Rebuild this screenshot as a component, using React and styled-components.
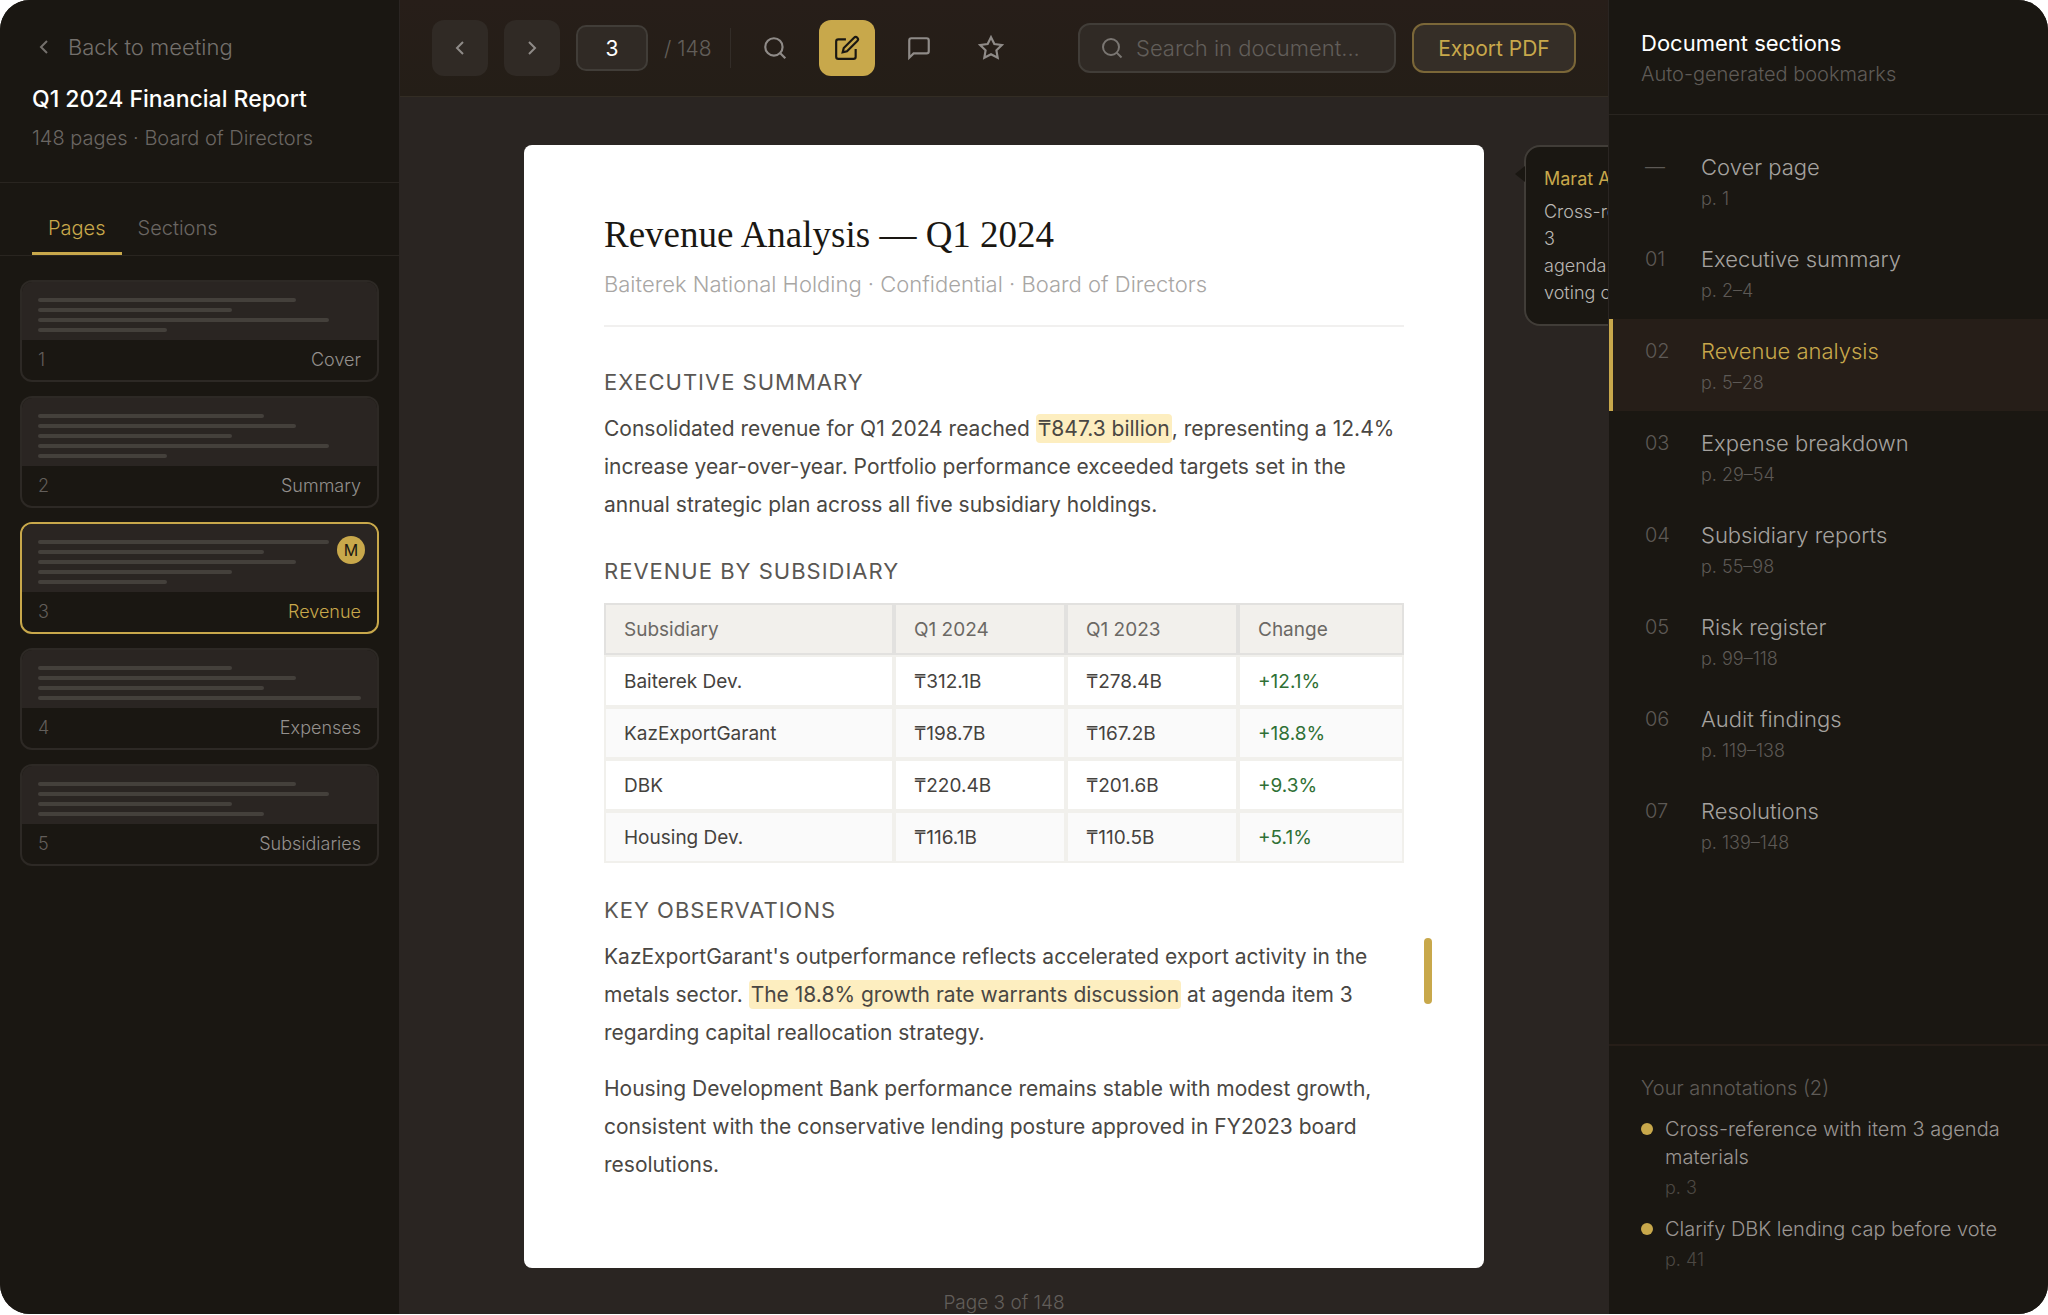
import styled, { createGlobalStyle } from "styled-components";

const colors = {
  gold: "#c8a84b",
  ink: "#1a1712",
  panel: "#2a2522",
  brown: "#261e18",
  line: "#292520",
};

const GlobalStyle = createGlobalStyle`
  * {
    box-sizing: border-box;
  }
  body {
    margin: 0;
    background: #fff;
    font-family: "Inter", sans-serif;
    font-weight: 300;
  }
  h1, h2, p, ul, ol {
    margin: 0;
    padding: 0;
    font-weight: inherit;
  }
  button, input {
    font-family: inherit;
    font-weight: inherit;
  }
`;

const Shell = styled.div`
  display: flex;
  height: calc(100vh - 1px);
  border-radius: 30px;
  overflow: hidden;
  background: ${colors.panel};
`;

const Sidebar = styled.aside`
  flex: 0 0 400px;
  background: ${colors.ink};
  border-right: 1px solid ${colors.panel};
`;

const SidebarHead = styled.header`
  padding: 32px 32px 30px;
  border-bottom: 1px solid ${colors.line};
`;

const BackLink = styled.a`
  display: flex;
  align-items: center;
  gap: 12px;
  font-size: 22px;
  line-height: 30px;
  color: #74706c;
  text-decoration: none;
`;

const DocName = styled.h1`
  margin-top: 22px;
  font-size: 23px;
  font-weight: 500;
  line-height: 30px;
  color: #fff;
`;

const DocMeta = styled.p`
  margin-top: 10px;
  font-size: 20px;
  line-height: 28px;
  color: #6a6662;
`;

const TabBar = styled.div`
  display: flex;
  padding: 16px 32px 0;
  border-bottom: 1px solid ${colors.line};
`;

const Tab = styled.button`
  height: 56px;
  padding: 4px 16px 0;
  border: 0;
  border-bottom: 3px solid ${({ $active }) => ($active ? colors.gold : "transparent")};
  background: none;
  font-size: 20px;
  color: ${({ $active }) => ($active ? colors.gold : "#6a6662")};
`;

const ThumbList = styled.div`
  display: flex;
  flex-direction: column;
  gap: 14px;
  padding: 24px 20px;
`;

const Thumb = styled.button`
  position: relative;
  display: block;
  padding: 0;
  overflow: hidden;
  border: 2px solid ${({ $active }) => ($active ? colors.gold : "#2d2925")};
  border-radius: 12px;
  background: ${colors.ink};
  text-align: left;
`;

const ThumbPreview = styled.div`
  display: flex;
  flex-direction: column;
  gap: 6px;
  padding: 16px 16px 8px;
  background: ${colors.panel};
`;

const ThumbLine = styled.div`
  height: 4px;
  border-radius: 2px;
  background: #44403b;
`;

const ThumbFooter = styled.div`
  display: flex;
  justify-content: space-between;
  padding: 0 16px;
  font-size: 18px;
  line-height: 40px;
  color: ${({ $active }) => ($active ? colors.gold : "#94908d")};
`;

const ThumbNumber = styled.span`
  color: #625e5a;
`;

const ThumbBadge = styled.span`
  position: absolute;
  top: 12px;
  right: 12px;
  width: 28px;
  border-radius: 50%;
  background: ${colors.gold};
  font-size: 16px;
  font-weight: 400;
  line-height: 28px;
  text-align: center;
  color: ${colors.ink};
`;

const Main = styled.main`
  flex: 1;
  min-width: 0;
  display: flex;
  flex-direction: column;
`;

const Toolbar = styled.div`
  display: flex;
  align-items: center;
  gap: 16px;
  height: 97px;
  padding: 0 32px;
  border-bottom: 1px solid #332d24;
  background: linear-gradient(#271e19, #241e17);
`;

const ToolButton = styled.button`
  display: flex;
  align-items: center;
  justify-content: center;
  width: 56px;
  height: 56px;
  padding: 0;
  border: 0;
  border-radius: 12px;
  background: ${({ $tone }) =>
    $tone === "active" ? colors.gold : $tone === "filled" ? "#302a25" : "none"};
  color: ${({ $tone }) => ($tone === "active" ? colors.ink : "#8f8b88")};
`;

const PageInput = styled.input`
  width: 72px;
  height: 46px;
  padding: 0;
  border: 2px solid #413d38;
  border-radius: 10px;
  background: #302a25;
  font-size: 21px;
  font-weight: 400;
  text-align: center;
  color: #fff;
`;

const PageTotal = styled.span`
  width: 50px;
  font-size: 21px;
  white-space: nowrap;
  color: #625e5a;
`;

const Divider = styled.div`
  width: 1px;
  height: 40px;
  background: #332d28;
`;

const SearchBox = styled.label`
  display: flex;
  align-items: center;
  gap: 12px;
  width: 318px;
  height: 50px;
  margin-left: auto;
  padding: 0 20px;
  border: 2px solid #413d38;
  border-radius: 12px;
  background: #302a25;
  color: #7a7672;
`;

const SearchInput = styled.input`
  flex: 1;
  min-width: 0;
  padding: 0;
  border: 0;
  outline: 0;
  background: none;
  font-size: 22px;
  color: #fff;

  &::placeholder {
    color: #625e5a;
    opacity: 1;
  }
`;

const ExportButton = styled.button`
  width: 164px;
  height: 50px;
  padding: 0;
  border: 2px solid #7b6738;
  border-radius: 12px;
  background: #352e27;
  font-size: 21px;
  font-weight: 400;
  white-space: nowrap;
  color: ${colors.gold};
`;

const Viewer = styled.div`
  flex: 1;
  min-height: 0;
  overflow: hidden;
  padding: 48px 124px 0;
`;

const Sheet = styled.article`
  position: relative;
  max-width: 960px;
  margin: 0 auto;
  padding: 64px 80px 84px;
  border-radius: 8px;
  background: #fff;
`;

const SheetTitle = styled.h1`
  font-family: "Liberation Serif", serif;
  font-size: 37px;
  line-height: 52px;
  color: ${colors.ink};
`;

const SheetMeta = styled.p`
  padding: 8px 0 26px;
  border-bottom: 2px solid #f1f0ef;
  font-size: 22px;
  line-height: 30px;
  color: #a8a6a4;
`;

const SheetHeading = styled.h2`
  margin: ${({ $first }) => ($first ? 40 : 32)}px 0 13px;
  font-size: 22px;
  font-weight: 400;
  line-height: 30px;
  letter-spacing: 1px;
  text-transform: uppercase;
  color: #5a5753;
`;

const Paragraph = styled.p`
  position: relative;
  font-size: 21px;
  font-weight: 400;
  line-height: 38px;
  color: #4a4743;

  & + & {
    margin-top: 18px;
  }
`;

const Highlight = styled.mark`
  padding: 2px;
  border-radius: 4px;
  background: #fdeec0;
  color: inherit;
`;

const MarginMark = styled.span`
  position: absolute;
  top: 0;
  right: -28px;
  width: 8px;
  height: 66px;
  border-radius: 4px;
  background: ${colors.gold};
`;

const Table = styled.table`
  width: 100%;
  margin-top: 17px;
  table-layout: fixed;
  border-collapse: separate;
  border-spacing: 0;
  font-size: 19px;
  font-weight: 400;
  text-align: left;
  color: #45423e;

  th,
  td {
    height: 52px;
    padding: 0 18px;
    border: 2px solid #f1f0ec;
    font-weight: 400;
  }
  th {
    border-color: #e2e1df;
    background: #f2f0ec;
    color: #6b6864;
  }
  tbody tr:nth-child(even) {
    background: #fafafa;
  }
  td:last-child {
    color: #2f7035;
  }
`;

const PageNote = styled.p`
  margin-top: 20px;
  font-size: 19px;
  line-height: 30px;
  text-align: center;
  color: #625e5a;
`;

const Comment = styled.aside`
  position: absolute;
  top: 0;
  left: calc(100% + 40px);
  width: 260px;
  padding: 18px;
  border: 2px solid #413d38;
  border-radius: 16px;
  background: ${colors.ink};
  font-size: 18px;
  line-height: 27px;
  color: #bab7b4;

  &::before {
    content: "";
    position: absolute;
    top: 19px;
    left: -11px;
    border: 8px solid transparent;
    border-left-width: 0;
    border-right: 10px solid ${colors.ink};
  }
`;

const CommentAuthor = styled.p`
  margin-bottom: 6px;
  font-weight: 400;
  color: ${colors.gold};
`;

const Outline = styled.aside`
  flex: 0 0 440px;
  position: relative;
  display: flex;
  flex-direction: column;
  background: ${colors.ink};
  border-left: 1px solid ${colors.panel};
`;

const OutlineHead = styled.header`
  padding: 28px 32px 26px;
  border-bottom: 1px solid ${colors.line};
`;

const OutlineTitle = styled.h2`
  font-size: 22px;
  font-weight: 400;
  line-height: 30px;
  color: #fff;
`;

const OutlineHint = styled.p`
  margin-top: 2px;
  font-size: 20px;
  line-height: 28px;
  color: #5f5b57;
`;

const SectionList = styled.nav`
  flex: 1;
  padding: 20px 0;
`;

const SectionLink = styled.a`
  display: grid;
  grid-template-columns: 56px 1fr;
  align-content: center;
  row-gap: 2px;
  height: 92px;
  padding: 4px 28px 0 32px;
  border-left: 4px solid ${({ $active }) => ($active ? colors.gold : "transparent")};
  background: ${({ $active }) => ($active ? colors.brown : "none")};
  font-size: 22px;
  line-height: 30px;
  text-decoration: none;
  color: ${({ $active }) => ($active ? colors.gold : "#a5a29f")};
`;

const SectionNumber = styled.span`
  font-size: 20px;
  color: #5d5955;
`;

const SectionPages = styled.span`
  grid-column: 2;
  font-size: 18px;
  color: #5d5955;
`;

const Notes = styled.section`
  padding: 28px 32px 40px;
  border-top: 2px solid ${colors.brown};
`;

const NotesTitle = styled.h2`
  margin-bottom: 13px;
  font-size: 20px;
  line-height: 28px;
  color: #5f5b57;
`;

const NoteList = styled.ul`
  display: flex;
  flex-direction: column;
  gap: 13px;
  list-style: none;
`;

const Note = styled.li`
  display: flex;
  gap: 12px;
  font-size: 20px;
  line-height: 28px;
  color: #9a9693;

  &::before {
    content: "";
    flex: 0 0 12px;
    height: 12px;
    margin-top: 8px;
    border-radius: 50%;
    background: ${colors.gold};
  }
`;

const NotePage = styled.p`
  margin-top: 3px;
  font-size: 18px;
  color: #4c4843;
`;

const Icon = ({ size = 26, children }) => (
  <svg
    width={size}
    height={size}
    viewBox="0 0 24 24"
    fill="none"
    stroke="currentColor"
    strokeWidth="2"
    aria-hidden="true"
  >
    {children}
  </svg>
);

const SearchIcon = ({ size }) => (
  <Icon size={size}>
    <circle cx="11" cy="11" r="8" />
    <path d="M21.5 21.5l-4.85-4.85" />
  </Icon>
);

const pages = [
  { title: "Cover", lines: [80, 60, 90, 40] },
  { title: "Summary", lines: [70, 80, 60, 90, 40] },
  { title: "Revenue", lines: [90, 70, 80, 60, 40], badge: "M" },
  { title: "Expenses", lines: [60, 80, 70, 100] },
  { title: "Subsidiaries", lines: [80, 90, 60, 70] },
];

const columns = [
  { title: "Subsidiary", width: 290 },
  { title: "Q1 2024", width: 172 },
  { title: "Q1 2023", width: 172 },
  { title: "Change", width: 166 },
];

const rows = [
  ["Baiterek Dev.", "₸312.1B", "₸278.4B", "+12.1%"],
  ["KazExportGarant", "₸198.7B", "₸167.2B", "+18.8%"],
  ["DBK", "₸220.4B", "₸201.6B", "+9.3%"],
  ["Housing Dev.", "₸116.1B", "₸110.5B", "+5.1%"],
];

const sections = [
  ["—", "Cover page", "p. 1"],
  ["01", "Executive summary", "p. 2–4"],
  ["02", "Revenue analysis", "p. 5–28"],
  ["03", "Expense breakdown", "p. 29–54"],
  ["04", "Subsidiary reports", "p. 55–98"],
  ["05", "Risk register", "p. 99–118"],
  ["06", "Audit findings", "p. 119–138"],
  ["07", "Resolutions", "p. 139–148"],
];

const notes = [
  ["Cross-reference with item 3 agenda materials", "p. 3"],
  ["Clarify DBK lending cap before vote", "p. 41"],
];

const PagesSidebar = () => (
  <Sidebar>
    <SidebarHead>
      <BackLink href="#meeting">
        <Icon size={24}>
          <path d="M15 18l-6-6 6-6" />
        </Icon>
        Back to meeting
      </BackLink>
      <DocName>Q1 2024 Financial Report</DocName>
      <DocMeta>148 pages · Board of Directors</DocMeta>
    </SidebarHead>
    <TabBar role="tablist">
      <Tab role="tab" aria-selected="true" $active>
        Pages
      </Tab>
      <Tab role="tab" aria-selected="false">
        Sections
      </Tab>
    </TabBar>
    <ThumbList>
      {pages.map(({ title, lines, badge }, index) => (
        <Thumb key={title} $active={index === 2}>
          <ThumbPreview>
            {lines.map((width) => (
              <ThumbLine key={width} style={{ width: `${width}%` }} />
            ))}
          </ThumbPreview>
          <ThumbFooter $active={index === 2}>
            <ThumbNumber>{index + 1}</ThumbNumber>
            {title}
          </ThumbFooter>
          {badge && <ThumbBadge>{badge}</ThumbBadge>}
        </Thumb>
      ))}
    </ThumbList>
  </Sidebar>
);

const ViewerToolbar = () => (
  <Toolbar>
    <ToolButton $tone="filled" aria-label="Previous page">
      <Icon size={24}>
        <path d="M15 18l-6-6 6-6" />
      </Icon>
    </ToolButton>
    <ToolButton $tone="filled" aria-label="Next page">
      <Icon size={24}>
        <path d="M9 18l6-6-6-6" />
      </Icon>
    </ToolButton>
    <PageInput aria-label="Page number" defaultValue="3" />
    <PageTotal>/ 148</PageTotal>
    <Divider />
    <ToolButton aria-label="Find">
      <SearchIcon />
    </ToolButton>
    <ToolButton $tone="active" aria-label="Annotate">
      <Icon>
        <path d="M11 4H4a2 2 0 0 0-2 2v14a2 2 0 0 0 2 2h14a2 2 0 0 0 2-2v-7" />
        <path d="M18.5 2.5a2.121 2.121 0 0 1 3 3L12 15l-4 1 1-4 9.5-9.5z" />
      </Icon>
    </ToolButton>
    <ToolButton aria-label="Comment">
      <Icon>
        <path d="M21 15a2 2 0 0 1-2 2H7l-4 4V5a2 2 0 0 1 2-2h14a2 2 0 0 1 2 2z" />
      </Icon>
    </ToolButton>
    <ToolButton aria-label="Bookmark">
      <Icon>
        <path d="M12 2l3.09 6.26L22 9.27l-5 4.87 1.18 6.88L12 17.77l-6.18 3.25L7 14.14 2 9.27l6.91-1.01L12 2z" />
      </Icon>
    </ToolButton>
    <SearchBox>
      <SearchIcon size={24} />
      <SearchInput aria-label="Search in document" placeholder="Search in document..." />
    </SearchBox>
    <ExportButton>Export PDF</ExportButton>
  </Toolbar>
);

const DocumentSheet = () => (
  <Sheet>
    <SheetTitle>Revenue Analysis — Q1 2024</SheetTitle>
    <SheetMeta>Baiterek National Holding · Confidential · Board of Directors</SheetMeta>
    <SheetHeading $first>Executive summary</SheetHeading>
    <Paragraph>
      Consolidated revenue for Q1 2024 reached <Highlight>₸847.3 billion</Highlight>, representing a
      12.4% increase year-over-year. Portfolio performance exceeded targets set in the annual
      strategic plan across all five subsidiary holdings.
    </Paragraph>
    <SheetHeading>Revenue by subsidiary</SheetHeading>
    <Table>
      <colgroup>
        {columns.map(({ title, width }) => (
          <col key={title} style={{ width: `${width / 8}%` }} />
        ))}
      </colgroup>
      <thead>
        <tr>
          {columns.map(({ title }) => (
            <th key={title}>{title}</th>
          ))}
        </tr>
      </thead>
      <tbody>
        {rows.map((row) => (
          <tr key={row[0]}>
            {row.map((cell) => (
              <td key={cell}>{cell}</td>
            ))}
          </tr>
        ))}
      </tbody>
    </Table>
    <SheetHeading>Key observations</SheetHeading>
    <Paragraph>
      KazExportGarant's outperformance reflects accelerated export activity in the metals sector.{" "}
      <Highlight>The 18.8% growth rate warrants discussion</Highlight> at agenda item 3 regarding
      capital reallocation strategy.
      <MarginMark />
    </Paragraph>
    <Paragraph>
      Housing Development Bank performance remains stable with modest growth, consistent with the
      conservative lending posture approved in FY2023 board resolutions.
    </Paragraph>
    <Comment>
      <CommentAuthor>Marat A.</CommentAuthor>
      <p>
        Cross-reference with item 3<br />
        agenda materials before voting call
      </p>
    </Comment>
  </Sheet>
);

const SectionsSidebar = () => (
  <Outline>
    <OutlineHead>
      <OutlineTitle>Document sections</OutlineTitle>
      <OutlineHint>Auto-generated bookmarks</OutlineHint>
    </OutlineHead>
    <SectionList>
      {sections.map(([number, title, range]) => (
        <SectionLink key={number} href={`#section-${number}`} $active={number === "02"}>
          <SectionNumber>{number}</SectionNumber>
          {title}
          <SectionPages>{range}</SectionPages>
        </SectionLink>
      ))}
    </SectionList>
    <Notes>
      <NotesTitle>Your annotations (2)</NotesTitle>
      <NoteList>
        {notes.map(([text, page]) => (
          <Note key={page}>
            <div>
              {text}
              <NotePage>{page}</NotePage>
            </div>
          </Note>
        ))}
      </NoteList>
    </Notes>
  </Outline>
);

const App = () => (
  <>
    <GlobalStyle />
    <Shell>
      <PagesSidebar />
      <Main>
        <ViewerToolbar />
        <Viewer>
          <DocumentSheet />
          <PageNote>Page 3 of 148</PageNote>
        </Viewer>
      </Main>
      <SectionsSidebar />
    </Shell>
  </>
);

export default App;
